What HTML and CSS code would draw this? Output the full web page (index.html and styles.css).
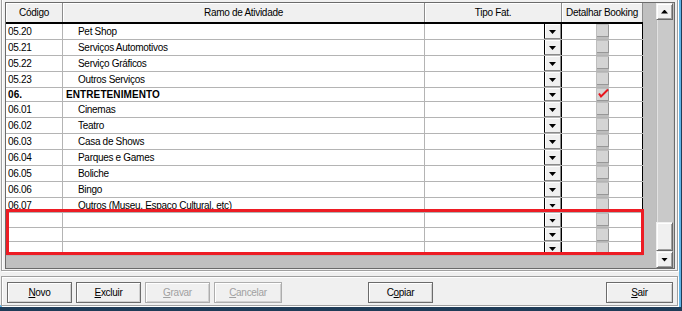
FILE: index.html
```html
<!DOCTYPE html>
<html>

<head>
    <meta charset="UTF-8">
    <title>Ramo de Atividade</title>
    <link rel="stylesheet" href="styles.css">
</head>

<body>
    <div class="janela">
        <section class="painel topo">
            <div class="grade">
                <div class="tabela">
                    <div class="linha cab">
                        <div>Código</div>
                        <div>Ramo de Atividade</div>
                        <div>Tipo Fat.</div>
                        <div>Detalhar Booking</div>
                    </div>
                    <div class="linha">
                        <div class="cod">05.20</div>
                        <div class="ramo">Pet Shop</div>
                        <div class="tipo"><span class="combo"></span></div>
                        <div class="det"><span class="chk"></span></div>
                    </div>
                    <div class="linha">
                        <div class="cod">05.21</div>
                        <div class="ramo">Serviços Automotivos</div>
                        <div class="tipo"><span class="combo"></span></div>
                        <div class="det"><span class="chk"></span></div>
                    </div>
                    <div class="linha">
                        <div class="cod">05.22</div>
                        <div class="ramo">Serviço Gráficos</div>
                        <div class="tipo"><span class="combo"></span></div>
                        <div class="det"><span class="chk"></span></div>
                    </div>
                    <div class="linha">
                        <div class="cod">05.23</div>
                        <div class="ramo">Outros Serviços</div>
                        <div class="tipo"><span class="combo"></span></div>
                        <div class="det"><span class="chk"></span></div>
                    </div>
                    <div class="linha grupo h14">
                        <div class="cod">06.</div>
                        <div class="ramo">ENTRETENIMENTO</div>
                        <div class="tipo"><span class="combo"></span></div>
                        <div class="det">
                            <span class="chk">
                                <svg width="13" height="13" viewBox="0 0 13 13">
                                    <polyline points="3,5.5 5,8.5 12,1.5" fill="none" stroke="#e8141c" stroke-width="2" />
                                </svg>
                            </span>
                        </div>
                    </div>
                    <div class="linha">
                        <div class="cod">06.01</div>
                        <div class="ramo">Cinemas</div>
                        <div class="tipo"><span class="combo"></span></div>
                        <div class="det"><span class="chk"></span></div>
                    </div>
                    <div class="linha">
                        <div class="cod">06.02</div>
                        <div class="ramo">Teatro</div>
                        <div class="tipo"><span class="combo"></span></div>
                        <div class="det"><span class="chk"></span></div>
                    </div>
                    <div class="linha">
                        <div class="cod">06.03</div>
                        <div class="ramo">Casa de Shows</div>
                        <div class="tipo"><span class="combo"></span></div>
                        <div class="det"><span class="chk"></span></div>
                    </div>
                    <div class="linha">
                        <div class="cod">06.04</div>
                        <div class="ramo">Parques e Games</div>
                        <div class="tipo"><span class="combo"></span></div>
                        <div class="det"><span class="chk"></span></div>
                    </div>
                    <div class="linha">
                        <div class="cod">06.05</div>
                        <div class="ramo">Boliche</div>
                        <div class="tipo"><span class="combo"></span></div>
                        <div class="det"><span class="chk"></span></div>
                    </div>
                    <div class="linha">
                        <div class="cod">06.06</div>
                        <div class="ramo">Bingo</div>
                        <div class="tipo"><span class="combo"></span></div>
                        <div class="det"><span class="chk"></span></div>
                    </div>
                    <div class="linha h15">
                        <div class="cod">06.07</div>
                        <div class="ramo">Outros (Museu, Espaço Cultural, etc)</div>
                        <div class="tipo"><span class="combo"></span></div>
                        <div class="det"><span class="chk"></span></div>
                    </div>
                    <div class="linha h15">
                        <div class="cod"></div>
                        <div class="ramo"></div>
                        <div class="tipo"><span class="combo"></span></div>
                        <div class="det"><span class="chk"></span></div>
                    </div>
                    <div class="linha h14">
                        <div class="cod"></div>
                        <div class="ramo"></div>
                        <div class="tipo"><span class="combo"></span></div>
                        <div class="det"><span class="chk"></span></div>
                    </div>
                    <div class="linha h14">
                        <div class="cod"></div>
                        <div class="ramo"></div>
                        <div class="tipo"><span class="combo"></span></div>
                        <div class="det"><span class="chk"></span></div>
                    </div>
                </div>

                <div class="rolagem">
                    <div class="seta cima"></div>
                    <div class="trilho"></div>
                    <div class="cursor"></div>
                    <div class="seta baixo"></div>
                </div>

                <!-- marcacao vermelha sobre as linhas vazias -->
                <div class="destaque"></div>
            </div>
        </section>

        <section class="painel botoes">
            <button class="btn"><u>N</u>ovo</button>
            <button class="btn"><u>E</u>xcluir</button>
            <button class="btn" disabled><u>G</u>ravar</button>
            <button class="btn largo" disabled><u>C</u>ancelar</button>
            <button class="btn copiar">C<u>o</u>piar</button>
            <button class="btn sair"><u>S</u>air</button>
        </section>
    </div>
</body>

</html>
```

FILE: styles.css
```css
* {
    box-sizing: border-box;
}

body {
    margin: 0;
    width: 682px;
    height: 311px;
    overflow: hidden;
    background-color: #1f3c58;
    font-family: "Liberation Sans", Arial, sans-serif;
    font-size: 10px;
    letter-spacing: -0.3px;
    color: #000;
}

.janela {
    width: 681px;
    height: 309px;
    background-color: #f0f0f0;
    border-right: 2px solid #62b4e6;
    border-bottom: 2px solid #62b4e6;
}

.painel {
    margin-left: 1px;
    width: 677px;
    border: 1px solid #a0a0a0;
    box-shadow: inset 1px 1px #fff, 1px 1px #fff;
}

.topo {
    margin-top: -2px;
    padding: 3px 2px 1px 3px;
}

/* grade */

.grade {
    position: relative;
    display: flex;
    height: 267px;
    border: 1px solid #6b6b6b;
    background-color: #c0c0c0;
}

.tabela {
    width: 637px;
    align-self: flex-start;
    background-color: #fff;
}

.linha {
    display: grid;
    grid-template-columns: 57px 362px 137px 81px;
    height: 16px;
    border-bottom: 1px solid #b4b4b4;
}

.linha.h14 {
    height: 14px;
}

.linha.h15 {
    height: 15px;
}

.linha>div {
    display: flex;
    align-items: center;
    white-space: nowrap;
    border-right: 1px solid #b4b4b4;
}

.cab {
    height: 21px;
    border-bottom: 2px solid #000;
    background-color: #f0f0f0;
}

.cab>div {
    justify-content: center;
    border-right-color: #8c8c8c;
    box-shadow: inset 1px 1px #fff;
}

.cod {
    padding-left: 2px;
}

.ramo {
    padding-left: 15px;
}

.grupo {
    font-weight: bold;
    letter-spacing: 0.1px;
}

.grupo .ramo {
    padding-left: 3px;
}

.linha>.tipo {
    justify-content: flex-end;
    border-right-color: #000;
}

.linha>.det {
    justify-content: center;
    border-right-color: #000;
}

.cab>.tipo,
.cab>.det {
    border-right-color: #000;
}

.combo {
    display: flex;
    align-items: center;
    justify-content: center;
    width: 17px;
    height: 100%;
    background-color: #f0f0f0;
    border-left: 1px solid #000;
    border-right: 1px solid #8a8a8a;
    border-bottom: 1px solid #8a8a8a;
    box-shadow: inset 1px 1px #fff;
}

.combo::after {
    content: "";
    width: 7px;
    height: 4px;
    margin-top: 2px;
    background-color: #000;
    clip-path: polygon(0 0, 100% 0, 50% 100%);
}

.chk {
    position: relative;
    width: 13px;
    height: 100%;
    background-color: #bdbdbd;
}

.chk::before {
    content: "";
    display: block;
    width: 11px;
    height: 11px;
    margin: 1px 0 0 1px;
    background-color: #d4d4d4;
    border-right: 1px solid #979797;
    border-bottom: 1px solid #979797;
}

.chk svg {
    position: absolute;
    left: 0;
    top: 0;
}

/* barra de rolagem */

.rolagem {
    display: flex;
    flex-direction: column;
    width: 17px;
    margin-left: 13px;
}

.seta,
.cursor {
    display: flex;
    align-items: center;
    justify-content: center;
    background-color: #f0f0f0;
    border: 1px solid;
    border-color: #f0f0f0 #696969 #696969 #f0f0f0;
    box-shadow: inset 1px 1px #fff, inset -1px -1px #a0a0a0;
}

.seta {
    height: 17px;
}

.seta::after {
    content: "";
    width: 7px;
    height: 4px;
    background-color: #000;
}

.cima::after {
    clip-path: polygon(50% 0, 100% 100%, 0 100%);
}

.baixo::after {
    clip-path: polygon(0 0, 100% 0, 50% 100%);
}

.trilho {
    flex: 1;
    background-color: #c9c9c9;
    border-left: 1px solid #bcbcbc;
    box-shadow: inset 1px 0 #e2e2e2;
}

.cursor {
    height: 29px;
}

.destaque {
    position: absolute;
    left: 0;
    top: 206px;
    width: 638px;
    height: 46px;
    border: 3px solid #ed1c24;
}

/* botoes */

.botoes {
    display: flex;
    align-items: flex-start;
    gap: 4px;
    height: 30px;
    margin-top: 5px;
    padding: 5px 4px 0 5px;
}

.btn {
    width: 65px;
    height: 21px;
    padding: 0;
    font: inherit;
    letter-spacing: inherit;
    color: #000;
    background-color: #f0f0f0;
    border: 1px solid #6b6b6b;
    box-shadow: inset 1px 1px #fff, inset -1px -1px #d0d0d0;
}

.btn:disabled {
    color: #a0a0a0;
    border-color: #adadad;
}

.largo {
    width: 68px;
}

.copiar {
    margin-left: 82px;
}

.sair {
    width: 67px;
    margin-left: auto;
}
```
